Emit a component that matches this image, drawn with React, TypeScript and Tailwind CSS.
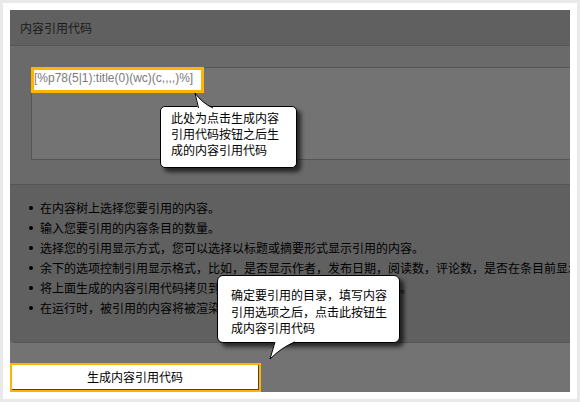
const cjk = '"Noto Sans CJK SC", "Liberation Sans", sans-serif';

const tips = [
  "在内容树上选择您要引用的内容。",
  "输入您要引用的内容条目的数量。",
  "选择您的引用显示方式，您可以选择以标题或摘要形式显示引用的内容。",
  "余下的选项控制引用显示格式，比如，是否显示作者，发布日期，阅读数，评论数，是否在条目前显示图标等。",
  "将上面生成的内容引用代码拷贝到您需要显示引用内容的页面模板中。",
  "在运行时，被引用的内容将被渲染到页面中。",
];

// callout tail pointing up (first note) or down (second note)
function TailUp() {
  return (
    <svg className="absolute left-[32px] top-[-15px]" width="24" height="17" viewBox="0 0 24 17">
      <path d="M5 17 L2 1 Q9 11 21 17 Z" fill="#fff" />
      <path d="M5.5 16 L2 1 Q9 11 20 16" fill="none" stroke="#000" strokeWidth="1" />
    </svg>
  );
}

function TailDown() {
  return (
    <svg className="absolute left-[48px] bottom-[-19px]" width="34" height="20" viewBox="0 0 34 20">
      <path d="M9 0 L4 18 Q16 6 30 0 Z" fill="#fff" />
      <path d="M9 1 L4 18 Q16 6 29 1" fill="none" stroke="#000" strokeWidth="1" />
    </svg>
  );
}

export default function App() {
  return (
    <div className="w-[580px] h-[402px] bg-[#e9e9e9] p-[3px]">
      <div className="h-full bg-white px-[7px] pt-[7px]">
        <div
          className="relative w-[560px] h-[382px] overflow-hidden bg-[#737373] flex flex-col text-[12px] text-black"
          style={{ fontFamily: cjk }}
        >
          {/* header */}
          <div className="h-[36px] shrink-0 bg-[#606060] border-b border-[#555] flex items-center px-[10px] text-[#1a1a1a]">
            内容引用代码
          </div>

          {/* generated code area */}
          <div className="shrink-0 bg-[#6a6a6a] border-b border-[#555] pt-[21px] pl-[21px] pb-[24px]">
            <div className="w-[620px] h-[93px] border border-[#555] bg-[#737373]">
              <div
                className="-mt-px -ml-px w-[173px] h-[26px] border-[3px] border-[#ffb400] bg-white text-[#7a7a7a] leading-[15px] pt-[1px]"
                style={{ fontFamily: '"Liberation Sans", Arial, sans-serif' }}
              >
                [%p78(5|1):title(0)(wc)(c,,,,)%]
              </div>
            </div>
          </div>

          {/* instructions */}
          <div className="shrink-0 h-[158px] bg-[#606060] border-b border-[#555] rounded-bl-[5px] pt-[13px] pl-[19px]">
            <ul className="flex flex-col">
              {tips.map((t) => (
                <li key={t} className="flex items-center h-[20px] whitespace-nowrap">
                  <span className="w-[4px] h-[4px] rounded-full bg-black shrink-0 mr-[7px]" />
                  {t}
                </li>
              ))}
            </ul>
          </div>

          {/* action */}
          <div className="flex-1 pt-[20px]">
            <button className="w-[251px] h-[29px] border-[2px] border-[#ffb400] bg-white">
              <span className="flex items-center justify-center w-full h-full border-r border-b border-[#444]">
                生成内容引用代码
              </span>
            </button>
          </div>

          {/* notes */}
          <div className="absolute left-[150px] top-[96px] w-[137px] h-[62px] bg-white border border-black rounded-[5px] shadow-[4px_4px_4px_rgba(0,0,0,0.65)] pl-[10px] pt-[3px] leading-[16px]">
            <TailUp />
            <p>此处为点击生成内容</p>
            <p>引用代码按钮之后生</p>
            <p>成的内容引用代码</p>
          </div>

          <div className="absolute left-[207px] top-[265px] w-[183px] h-[68px] bg-white border border-black rounded-[6px] shadow-[4px_4px_4px_rgba(0,0,0,0.65)] pl-[13px] pt-[11px] leading-[16.5px]">
            <TailDown />
            <p>确定要引用的目录，填写内容</p>
            <p>引用选项之后，点击此按钮生</p>
            <p>成内容引用代码</p>
          </div>
        </div>
      </div>
    </div>
  );
}
